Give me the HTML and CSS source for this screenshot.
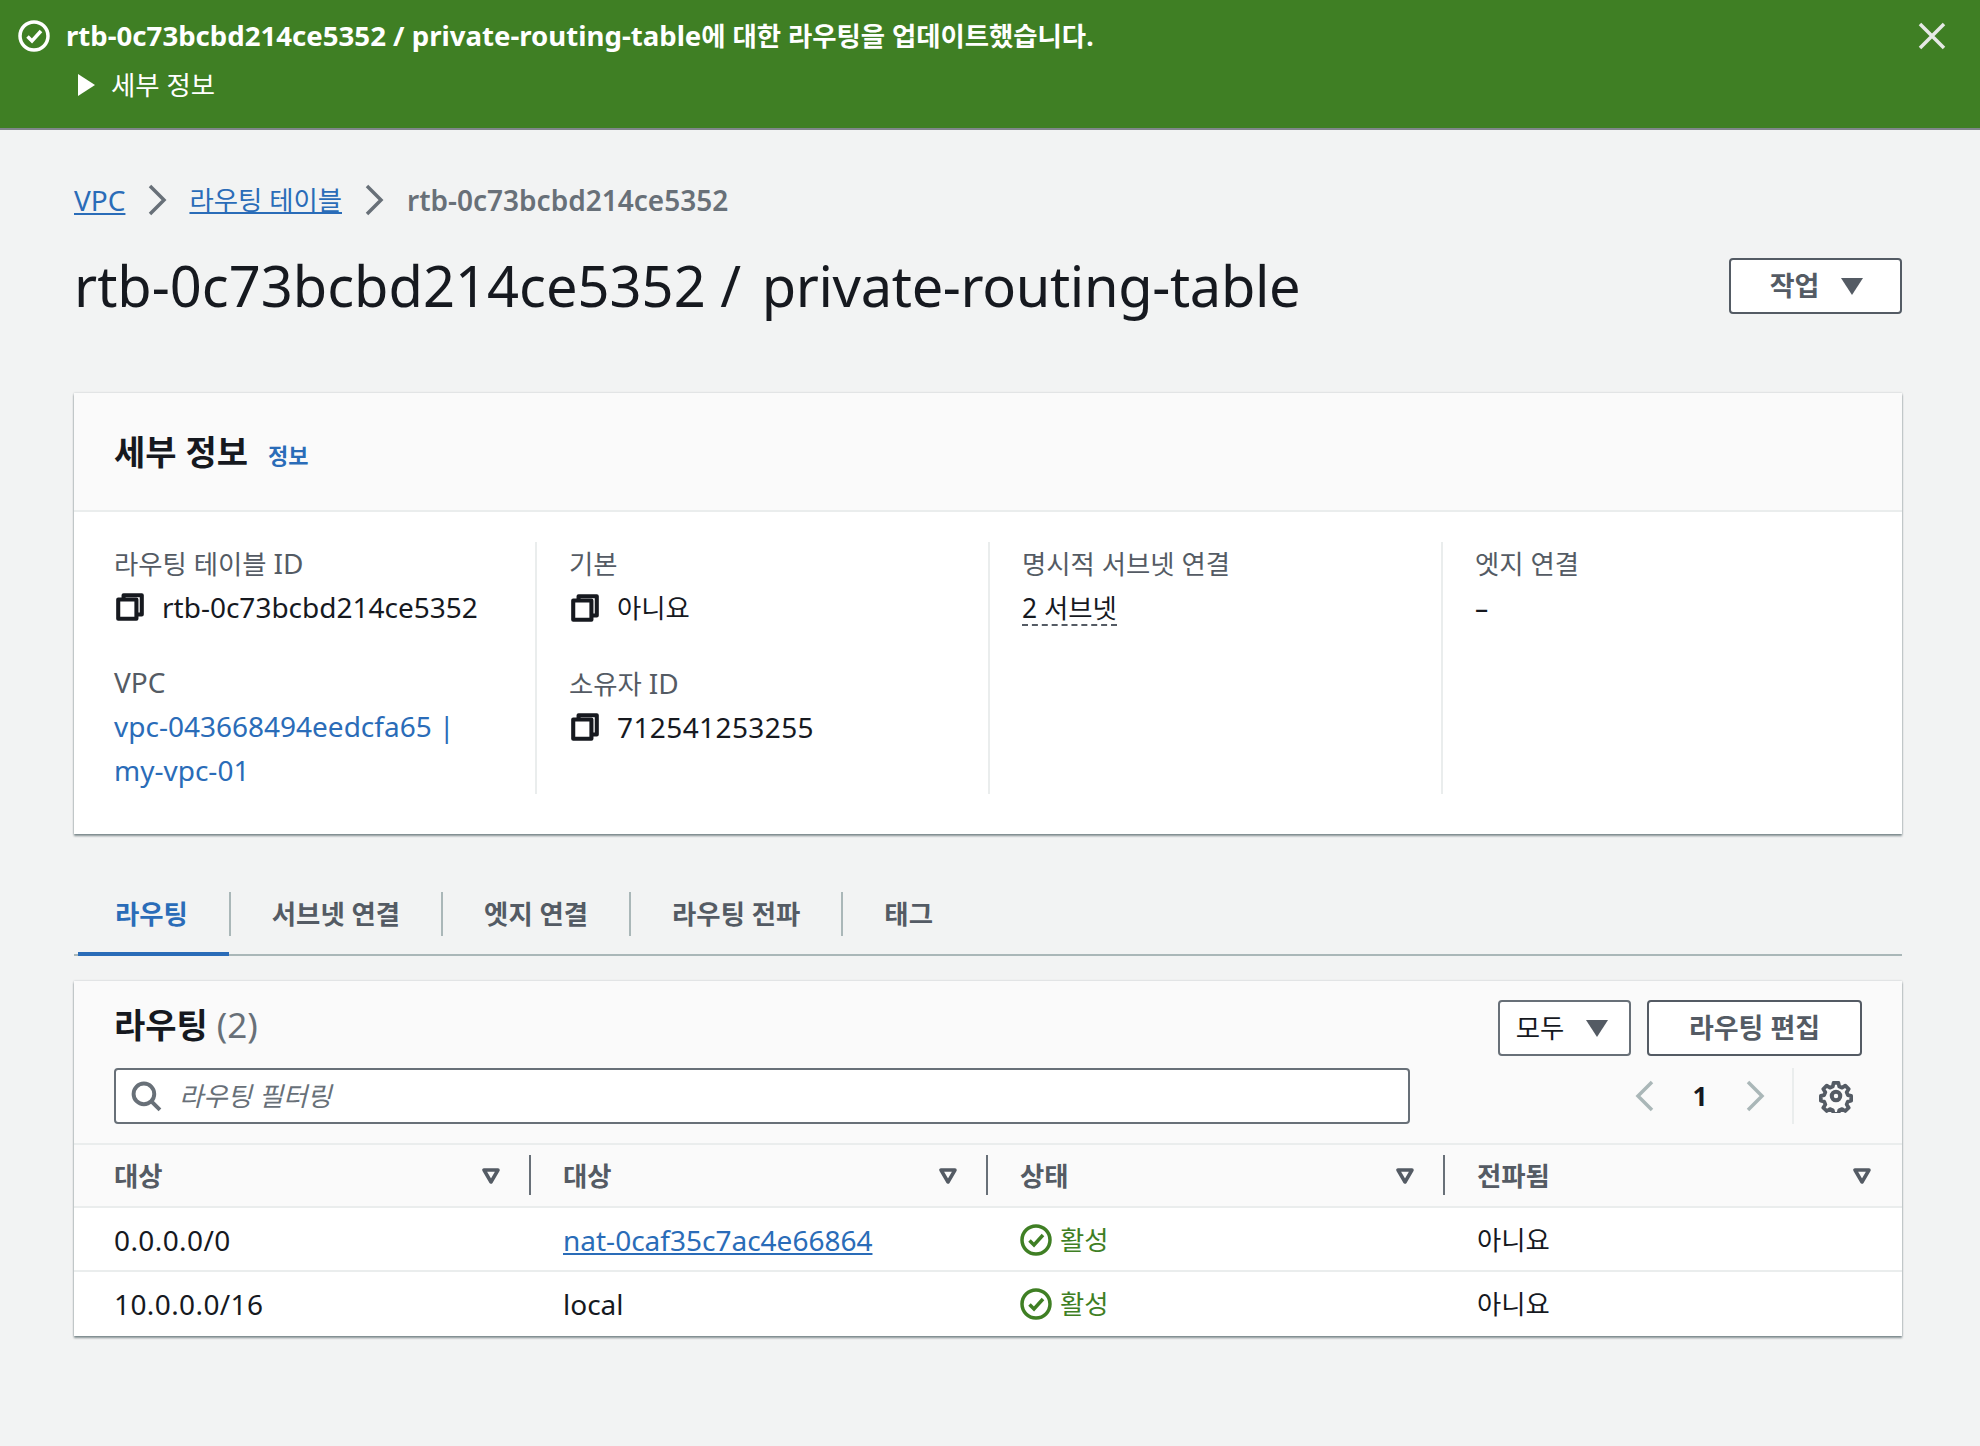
FILE: index.html
```html
<!DOCTYPE html>
<html lang="ko">
<head>
    <meta charset="utf-8">
    <title>private-routing-table</title>
    <link rel="stylesheet" href="styles.css">
</head>
<body>
    <div class="flash">
        <svg class="flash-check" viewBox="0 0 32 32"><circle cx="16" cy="16" r="14" /><path d="M9.500 16.500l4.500 4.500 9-10" /></svg>
        <div class="flash-body">
            <div class="flash-title"><span class="en">rtb-0c73bcbd214ce5352 / private-routing-table</span>에 대한 라우팅을 업데이트했습니다.</div>
            <div class="flash-more"><span class="flash-caret"></span>세부 정보</div>
        </div>
        <svg class="flash-close" viewBox="0 0 28 28"><path d="M2 2l24 24M26 2L2 26" /></svg>
    </div>

    <div class="page">
        <nav class="crumbs">
            <a href="#" class="en">VPC</a>
            <svg class="crumb-sep" viewBox="0 0 20 32"><path d="M3 2l14 14L3 30" /></svg>
            <a href="#">라우팅 테이블</a>
            <svg class="crumb-sep" viewBox="0 0 20 32"><path d="M3 2l14 14L3 30" /></svg>
            <span class="en crumb-current">rtb-0c73bcbd214ce5352</span>
        </nav>

        <div class="page-head">
            <h1>rtb-0c73bcbd214ce5352 / <span class="title-name">private-routing-table</span></h1>
            <button class="btn btn-action">작업<span class="caret"></span></button>
        </div>

        <section class="card details">
            <div class="details-head">
                <h2>세부 정보</h2>
                <a href="#" class="info">정보</a>
            </div>
            <div class="details-grid">
                <div class="col">
                    <div class="field">
                        <div class="label">라우팅 테이블 <span class="en">ID</span></div>
                        <div class="value en">
                            <svg class="copy" viewBox="0 0 28 28"><path d="M8 7V3h17v18h-5" /><rect x="3" y="7" width="17" height="18" /></svg>
                            rtb-0c73bcbd214ce5352
                        </div>
                    </div>
                    <div class="field">
                        <div class="label en">VPC</div>
                        <div class="value en"><a href="#" class="plain-link">vpc-043668494eedcfa65 |<br>my-vpc-01</a></div>
                    </div>
                </div>
                <div class="col">
                    <div class="field">
                        <div class="label">기본</div>
                        <div class="value">
                            <svg class="copy" viewBox="0 0 28 28"><path d="M8 7V3h17v18h-5" /><rect x="3" y="7" width="17" height="18" /></svg>
                            아니요
                        </div>
                    </div>
                    <div class="field">
                        <div class="label">소유자 <span class="en">ID</span></div>
                        <div class="value en num">
                            <svg class="copy" viewBox="0 0 28 28"><path d="M8 7V3h17v18h-5" /><rect x="3" y="7" width="17" height="18" /></svg>
                            712541253255
                        </div>
                    </div>
                </div>
                <div class="col">
                    <div class="field">
                        <div class="label">명시적 서브넷 연결</div>
                        <div class="value"><span class="dashed">2 서브넷</span></div>
                    </div>
                </div>
                <div class="col">
                    <div class="field">
                        <div class="label">엣지 연결</div>
                        <div class="value">–</div>
                    </div>
                </div>
            </div>
        </section>

        <div class="tabs">
            <a href="#" class="tab active">라우팅</a>
            <a href="#" class="tab">서브넷 연결</a>
            <a href="#" class="tab">엣지 연결</a>
            <a href="#" class="tab">라우팅 전파</a>
            <a href="#" class="tab">태그</a>
        </div>

        <section class="card routes">
            <div class="routes-head">
                <div class="routes-top">
                    <h2 class="routes-title">라우팅 <span class="count">(2)</span></h2>
                    <div class="routes-btns">
                        <button class="btn btn-all">모두<span class="caret"></span></button>
                        <button class="btn btn-edit">라우팅 편집</button>
                    </div>
                </div>
                <div class="routes-filter">
                    <div class="search">
                        <svg class="search-icon" viewBox="0 0 30 30"><circle cx="12.500" cy="12.500" r="10" /><path d="M19.500 19.500l8.500 8.500" /></svg>
                        <span class="placeholder">라우팅 필터링</span>
                    </div>
                    <div class="pager">
                        <svg class="pager-arrow" viewBox="0 0 20 32"><path d="M17 2L3 16l14 14" /></svg>
                        <span class="page-no">1</span>
                        <svg class="pager-arrow" viewBox="0 0 20 32"><path d="M3 2l14 14L3 30" /></svg>
                    </div>
                    <div class="settings">
                        <svg class="gear" viewBox="0 0 32 32">
                            <path d="M13.500 2.500h5l.8 3.800 2.900 1.200 3.300-2.100 3.500 3.500-2.100 3.300 1.200 2.900 3.400.8v5l-3.400.8-1.200 2.900 2.100 3.300-3.500 3.500-3.300-2.100-2.900 1.200-.8 3.800h-5l-.8-3.800-2.900-1.200-3.300 2.100-3.500-3.500 2.100-3.300-1.200-2.900-3.400-.8v-5l3.400-.8 1.200-2.900-2.100-3.300 3.500-3.500 3.300 2.100 2.900-1.200z" transform="translate(16 16) scale(.92) translate(-16 -16)" />
                            <circle cx="16" cy="16" r="4" />
                        </svg>
                    </div>
                </div>
            </div>

            <div class="route-row route-header">
                <div class="th first">대상<svg class="sort" viewBox="0 0 20 16"><path d="M3 2h14l-7 12z" /></svg></div>
                <div class="th">대상<svg class="sort" viewBox="0 0 20 16"><path d="M3 2h14l-7 12z" /></svg></div>
                <div class="th">상태<svg class="sort" viewBox="0 0 20 16"><path d="M3 2h14l-7 12z" /></svg></div>
                <div class="th last">전파됨<svg class="sort" viewBox="0 0 20 16"><path d="M3 2h14l-7 12z" /></svg></div>
            </div>
            <div class="route-row">
                <div class="td first en num">0.0.0.0/0</div>
                <div class="td en"><a href="#">nat-0caf35c7ac4e66864</a></div>
                <div class="td status"><svg class="ok" viewBox="0 0 32 32"><circle cx="16" cy="16" r="14" /><path d="M9.500 16.500l4.500 4.500 9-10" /></svg>활성</div>
                <div class="td">아니요</div>
            </div>
            <div class="route-row">
                <div class="td first en num">10.0.0.0/16</div>
                <div class="td en">local</div>
                <div class="td status"><svg class="ok" viewBox="0 0 32 32"><circle cx="16" cy="16" r="14" /><path d="M9.500 16.500l4.500 4.500 9-10" /></svg>활성</div>
                <div class="td">아니요</div>
            </div>
        </section>
    </div>
</body>
</html>
```

FILE: styles.css
```css
:root {
    --clr-green: #3f7f24;
    --clr-link: #2a6cb8;
    --clr-text: #16191f;
    --clr-gray: #545b64;
    --clr-line: #eaeded;
}
* {
    box-sizing: border-box;
}
body {
    margin: 0;
    height: 1446px;
    background-color: #f2f3f3;
    color: var(--clr-text);
    font-family: "Noto Sans", "Noto Sans CJK KR", sans-serif;
    font-size: 26.400px;
    line-height: 44px;
}
a {
    color: var(--clr-link);
}
h1, h2 {
    margin: 0;
}
/* latin text runs a bit larger than the korean next to it */
.en {
    font-size: 28px;
}
.num {
    letter-spacing: 0.4px;
}

/* green banner */
.flash {
    display: flex;
    height: 130px;
    padding: 14px 34px 0 18px;
    background-color: var(--clr-green);
    border-bottom: 2px solid #80868b;
    color: #fff;
}
.flash-check {
    width: 32px;
    height: 32px;
    margin-top: 6px;
    fill: none;
    stroke: #fff;
    stroke-width: 3.500;
}
.flash-body {
    flex: 1;
    margin-left: 16px;
}
.flash-title {
    font-weight: 700;
}
.flash-title .en {
    font-size: 27.600px;
    line-height: 1;
}
.flash-more {
    display: flex;
    align-items: center;
    height: 44px;
    margin-top: 5px;
    padding-left: 12px;
}
.flash-caret {
    width: 0;
    height: 0;
    margin-right: 16px;
    border-left: 17px solid #fff;
    border-top: 11px solid transparent;
    border-bottom: 11px solid transparent;
}
.flash-close {
    width: 28px;
    height: 28px;
    margin-top: 8px;
    fill: none;
    stroke: #e6e9e6;
    stroke-width: 3.500;
}

.page {
    padding: 0 78px 0 74px;
}

/* breadcrumbs */
.crumbs {
    display: flex;
    align-items: center;
    gap: 22px;
    height: 44px;
    margin-top: 48px;
}
.crumb-current {
    margin-left: 1px;
    color: #687078;
    font-weight: 600;
}
.crumb-sep {
    width: 20px;
    height: 32px;
    fill: none;
    stroke: #687078;
    stroke-width: 3.500;
}

.page-head {
    display: flex;
    align-items: center;
    justify-content: space-between;
    height: 70px;
    margin-top: 28px;
}
h1 {
    font-size: 56px;
    font-weight: 400;
    line-height: 70px;
}
.title-name {
    margin-left: 6px;
    letter-spacing: -0.350px;
}

/* buttons */
.btn {
    display: flex;
    align-items: center;
    justify-content: center;
    height: 56px;
    padding: 0;
    background: #fff;
    border: 2px solid var(--clr-gray);
    border-radius: 4px;
    color: var(--clr-gray);
    font: inherit;
    font-size: 27px;
    font-weight: 600;
}
.btn-action {
    width: 173px;
    margin-top: 2px;
    padding-left: 2px;
}
.btn-all {
    width: 133px;
    padding-right: 5px;
    font-size: 26.400px;
    font-weight: 400;
    color: var(--clr-text);
    border-color: #687078;
}
.btn-edit {
    width: 215px;
}
.caret {
    width: 0;
    height: 0;
    margin-left: 22px;
    border-top: 17px solid var(--clr-gray);
    border-left: 11px solid transparent;
    border-right: 11px solid transparent;
}

/* cards */
.card {
    background: #fff;
    box-shadow: 0 2px 2px rgba(0, 28, 36, 0.45), 0 0 2px rgba(0, 28, 36, 0.2);
}
.details {
    height: 441px;
    margin-top: 73px;
}
.details-head {
    display: flex;
    align-items: center;
    gap: 20px;
    height: 119px;
    padding: 0 40px;
    background: #fafafa;
    border-bottom: 2px solid var(--clr-line);
}
h2 {
    font-size: 34px;
    font-weight: 700;
    line-height: 50px;
}
.info {
    margin-top: 6px;
    font-size: 22px;
    font-weight: 600;
    text-decoration: none;
}
.details-grid {
    display: grid;
    grid-template-columns: 463px 453px 453px 1fr;
    margin-top: 30px;
}
.col {
    height: 252px;
    padding-left: 32px;
    border-right: 2px solid var(--clr-line);
}
.col:first-child {
    padding-left: 40px;
}
.col:last-child {
    border-right: none;
}
.field {
    margin-bottom: 32px;
}
.label {
    color: var(--clr-gray);
}
.label .en {
    line-height: 1;
}
.label.en, .value.en {
    margin-top: -1px;
    margin-bottom: 1px;
}
.value {
    display: flex;
    align-items: center;
    gap: 17px;
}
.plain-link {
    text-decoration: none;
}
.copy {
    width: 30px;
    height: 30px;
    margin-left: 1px;
    fill: #fff;
    stroke: var(--clr-text);
    stroke-width: 3.800;
    stroke-linejoin: round;
}
.dashed {
    margin-top: 6px;
    line-height: 32px;
    border-bottom: 2px dashed var(--clr-gray);
}

/* tabs */
.tabs {
    display: flex;
    align-items: stretch;
    height: 68px;
    margin-top: 54px;
    border-bottom: 2px solid #aab7b8;
}
.tab {
    display: flex;
    align-items: center;
    height: 44px;
    margin-top: 4px;
    padding: 0 41px;
    border-right: 2px solid #aab7b8;
    color: var(--clr-gray);
    font-weight: 600;
    text-decoration: none;
}
.tab:last-child {
    border-right: none;
}
.tab.active {
    position: relative;
    color: var(--clr-link);
    font-weight: 700;
}
.tab.active::after {
    content: "";
    position: absolute;
    left: 4px;
    right: 0;
    bottom: -20px;
    height: 4px;
    background: var(--clr-link);
}

/* routes table */
.routes {
    height: 355px;
    margin-top: 25px;
}
.routes-head {
    height: 164px;
    padding: 19px 40px 0;
    background: #fafafa;
    border-bottom: 2px solid var(--clr-line);
}
.routes-top {
    display: flex;
    align-items: center;
    justify-content: space-between;
    height: 56px;
}
.routes-title {
    padding-bottom: 6px;
}
.count {
    color: #687078;
    font-size: 35px;
    font-weight: 400;
}
.routes-btns {
    display: flex;
    gap: 16px;
}
.routes-filter {
    display: flex;
    align-items: center;
    margin-top: 12px;
}
.search {
    display: flex;
    align-items: center;
    width: 1296px;
    height: 56px;
    padding-left: 15px;
    background: #fff;
    border: 2px solid #687078;
    border-radius: 4px;
}
.search-icon {
    width: 31px;
    height: 31px;
    fill: none;
    stroke: #687078;
    stroke-width: 3.800;
}
.placeholder {
    margin-left: 17px;
    color: #687078;
    font-style: italic;
}
.pager {
    display: flex;
    align-items: center;
    justify-content: space-between;
    width: 130px;
    margin-left: 225px;
}
.pager-arrow {
    width: 20px;
    height: 32px;
    fill: none;
    stroke: #aab7b8;
    stroke-width: 3.500;
}
.page-no {
    font-weight: 700;
}
.settings {
    display: flex;
    align-items: center;
    height: 56px;
    margin-left: 27px;
    padding-left: 25px;
    border-left: 2px solid var(--clr-line);
}
.gear {
    width: 34px;
    height: 34px;
    fill: none;
    stroke: var(--clr-gray);
    stroke-width: 3.800;
    stroke-linejoin: round;
}
.route-row {
    display: grid;
    grid-template-columns: 457px 457px 457px 1fr;
    height: 64px;
    border-bottom: 2px solid var(--clr-line);
}
.route-row:last-child {
    border-bottom: none;
}
.route-header {
    height: 63px;
    background: #fafafa;
}
.th, .td {
    display: flex;
    align-items: center;
    padding-left: 32px;
}
.td {
    padding-top: 2px;
}
.route-row:last-child .td {
    padding-top: 0;
}
.th {
    position: relative;
    justify-content: space-between;
    padding-right: 30px;
    color: var(--clr-gray);
    font-weight: 700;
}
.th:not(.last)::after {
    content: "";
    position: absolute;
    right: 0;
    top: 10px;
    height: 40px;
    border-right: 2px solid #687078;
}
.first {
    padding-left: 40px;
}
.last {
    padding-right: 30px;
}
.sort {
    width: 20px;
    height: 16px;
    fill: none;
    stroke: var(--clr-gray);
    stroke-width: 3.500;
    stroke-linejoin: round;
}
.status {
    gap: 8px;
    color: var(--clr-green);
}
.ok {
    width: 32px;
    height: 32px;
    fill: none;
    stroke: var(--clr-green);
    stroke-width: 3.500;
}
```
